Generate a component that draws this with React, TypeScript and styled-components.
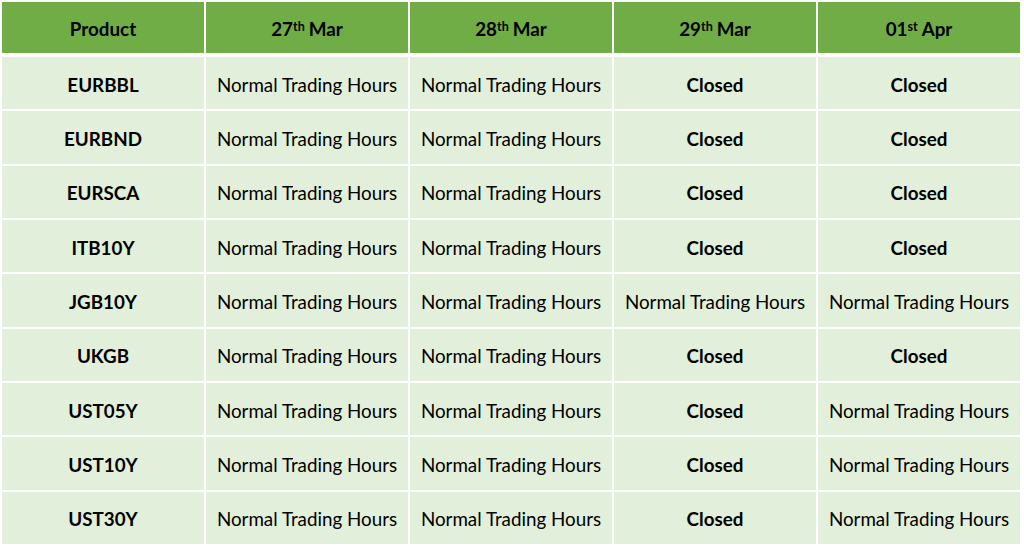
import React from "react";
import styled, { createGlobalStyle } from "styled-components";

const Global = createGlobalStyle`
  html, body { margin: 0; padding: 0; background: #ffffff; }
  body { font-family: Lato, "Open Sans", sans-serif; color: #000; }
`;

const Page = styled.div`
  width: 1024px;
  height: 546px;
  box-sizing: border-box;
  padding: 2px 4px 2px 2px;
  background: #ffffff;
`;

const Table = styled.div`
  display: grid;
  grid-template-columns: repeat(5, 1fr);
  grid-template-rows: 53px repeat(9, 1fr);
  column-gap: 2px;
  row-gap: 2px;
  height: 542px;
`;

const Cell = styled.div<{ $head?: boolean; $bold?: boolean }>`
  display: flex;
  align-items: center;
  justify-content: center;
  box-sizing: border-box;
  padding-top: ${(p) => (p.$head ? "1px" : "2px")};
  background: ${(p) => (p.$head ? "#70AD47" : "#E2EFDA")};
  font-size: 18.8px;
  font-weight: ${(p) => (p.$bold || p.$head ? 700 : 400)};
  margin-bottom: ${(p) => (p.$head ? "2px" : "0")};
  white-space: nowrap;
`;

const Sup = styled.sup`
  font-size: 12.5px;
  line-height: 0;
  position: relative;
  top: -1px;
  margin-right: 4px;
`;

const headers: [string, string, string][] = [
  ["27", "th", "Mar"],
  ["28", "th", "Mar"],
  ["29", "th", "Mar"],
  ["01", "st", "Apr"],
];

const N = "Normal Trading Hours";
const C = "Closed";

const rows: [string, string[]][] = [
  ["EURBBL", [N, N, C, C]],
  ["EURBND", [N, N, C, C]],
  ["EURSCA", [N, N, C, C]],
  ["ITB10Y", [N, N, C, C]],
  ["JGB10Y", [N, N, N, N]],
  ["UKGB", [N, N, C, C]],
  ["UST05Y", [N, N, C, N]],
  ["UST10Y", [N, N, C, N]],
  ["UST30Y", [N, N, C, N]],
];

export default function App() {
  return (
    <Page>
      <Global />
      <Table>
        <Cell $head>Product</Cell>
        {headers.map(([d, s, m]) => (
          <Cell $head key={d + m}>
            {d}
            <Sup>{s}</Sup>
            {m}
          </Cell>
        ))}
        {rows.map(([p, vals]) => (
          <React.Fragment key={p}>
            <Cell $bold>{p}</Cell>
            {vals.map((v, i) => (
              <Cell key={i} $bold={v === C}>
                {v}
              </Cell>
            ))}
          </React.Fragment>
        ))}
      </Table>
    </Page>
  );
}
